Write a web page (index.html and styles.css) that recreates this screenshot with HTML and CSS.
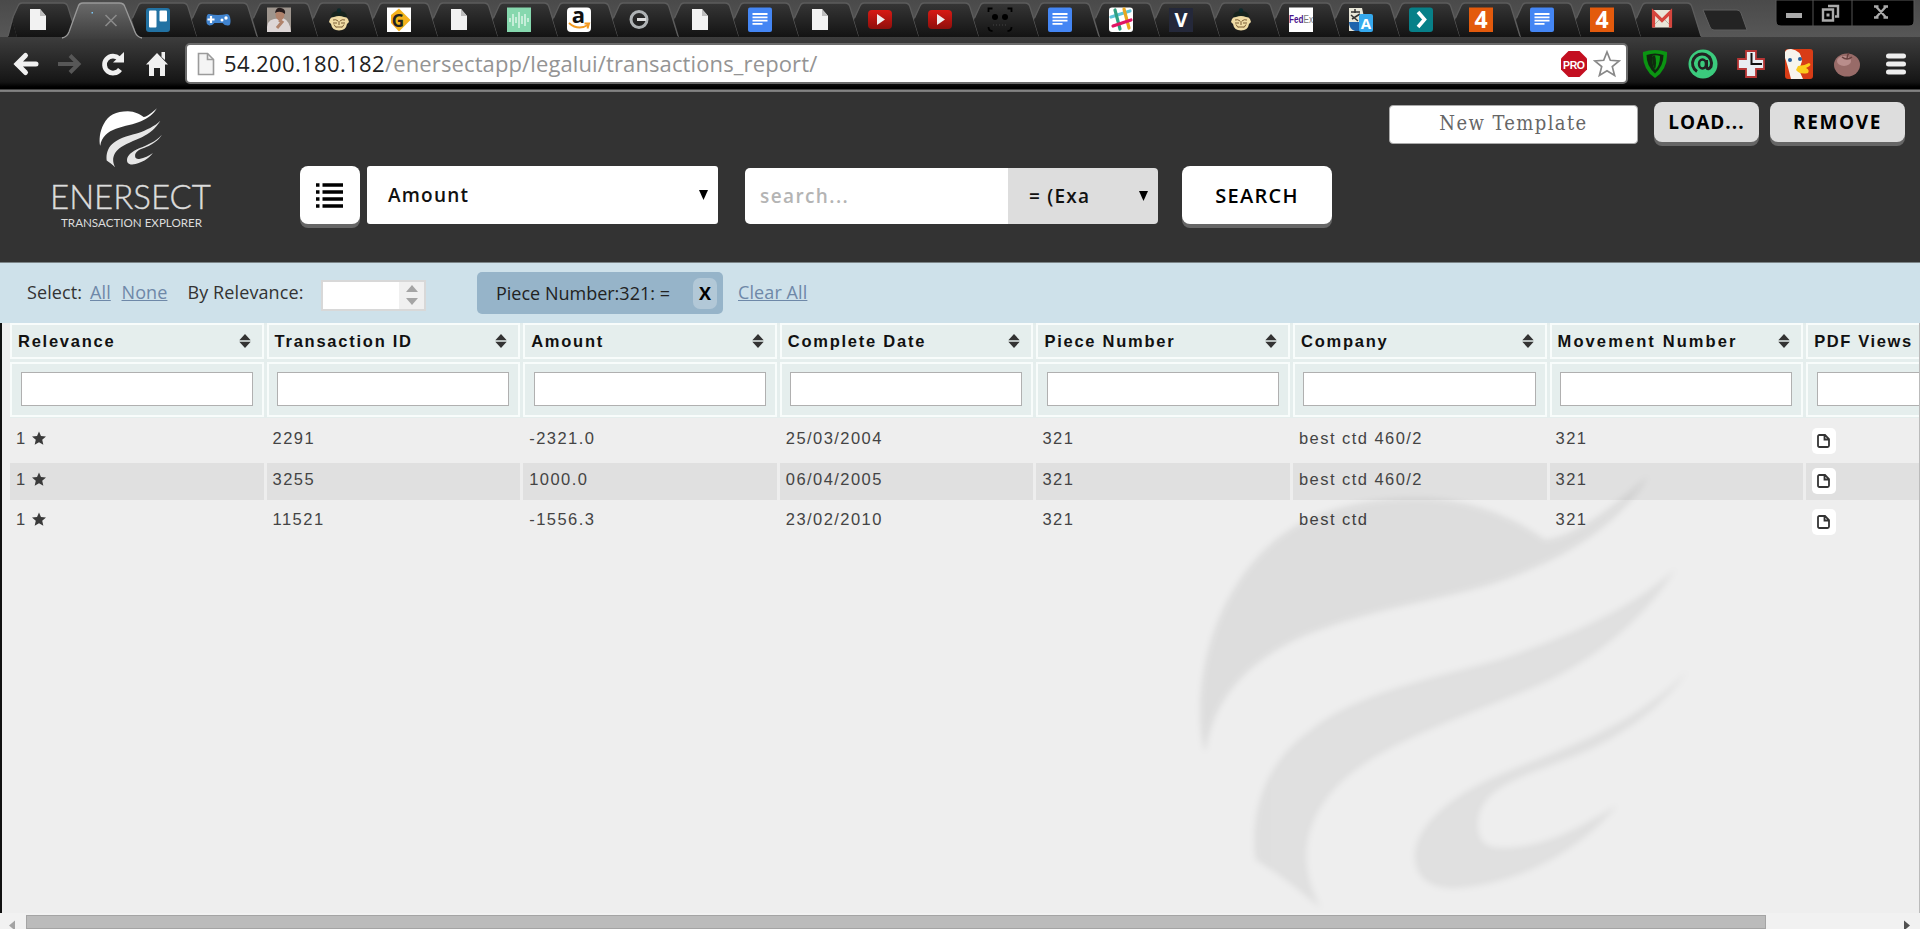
FILE: index.html
```html
<!DOCTYPE html>
<html lang="en">
<head>
<meta charset="utf-8">
<title>Enersect Transaction Explorer</title>
<link rel="stylesheet" href="styles.css">
</head>
<body>
<svg class="defs" width="0" height="0" aria-hidden="true">
  <defs>
    <linearGradient id="tabfill" x1="0" y1="0" x2="0" y2="1"><stop offset="0" stop-color="#363636"/><stop offset="1" stop-color="#131313"/></linearGradient>
    <linearGradient id="activefill" x1="0" y1="0" x2="0" y2="1"><stop offset="0" stop-color="#6a6a6a"/><stop offset="1" stop-color="#3d3d3d"/></linearGradient>
    <linearGradient id="red" x1="0" y1="0" x2="0" y2="1"><stop offset="0" stop-color="#d81a14"/><stop offset="1" stop-color="#8e0f0c"/></linearGradient>
    <!-- tab symbols share a 60x37 box whose centre is x=30 -->
    <symbol id="tab" overflow="visible"><path d="M9 37 4 20 10 6q1-3 4-3h41q4 0 5 4l9 30z" fill="url(#tabfill)"/><path d="M4.500 18 10 6q1-3 4-3h41q4 0 5 4l9 29" fill="none" stroke="#5c5c5c" stroke-width="1.300"/></symbol>
    <symbol id="doc" overflow="visible"><path d="M22 9h10l6 7v14H22z" fill="#f2f2f2"/><path d="M32 9v7h6z" fill="#bdbdbd"/></symbol>
    <symbol id="gdoc" overflow="visible"><rect x="18" y="7.500" width="24" height="24.500" rx="2" fill="#4486f4"/><path d="M22.500 14h15M22.500 17.300h15M22.500 20.600h15M22.500 23.900h10" stroke="#fff" stroke-width="1.800"/></symbol>
    <symbol id="tube" overflow="visible"><rect x="18" y="10" width="24" height="19" rx="4" fill="url(#red)"/><path d="M27 14v11l8-5.500z" fill="#eee"/></symbol>
    <symbol id="four" overflow="visible"><rect x="18" y="7.500" width="24" height="24.500" fill="#e35a0c"/><text x="30" y="28" class="fav-four">4</text></symbol>
    <symbol id="monk" overflow="visible"><path d="M22 17q0-6 8-6t8 6z" fill="#16231d"/><circle cx="30" cy="10.500" r="2.200" fill="#0d2a2c"/><path d="M21 19q1-2 4-2 5-2 10 0 3 0 4 2l1 3-2 2q-1 6.500-8 6.500T22 24l-2-2z" fill="#f0dca5"/><path d="M24 20q3-1 5 1M31 21q2-2 5-1M24 23h4M32 23h4M30 21v4M27 27h6M25 24.500l2 3M35 24.500l-2 3" stroke="#7b5c34" stroke-width="1" fill="none"/></symbol>
    <symbol id="swoosh" viewBox="0 0 1568 1407" preserveAspectRatio="none">
      <path d="M70 870C45 750 60 560 150 400C260 200 430 115 700 115C860 120 980 180 1060 240C1150 230 1270 130 1360 48C1290 170 1160 270 1000 335C850 405 620 430 430 500C250 560 100 680 75 870Z"/>
      <g class="swoosh-tail"><path d="M1440 325C1350 480 1180 620 1020 685C850 760 640 830 510 930C380 1030 320 1180 410 1345C350 1295 280 1235 220 1200C200 1060 250 900 380 810C520 690 800 640 940 595C1120 530 1310 450 1440 325Z"/>
      <path d="M1475 630C1400 750 1250 850 1130 895C1000 950 860 980 865 1100C870 1160 900 1165 960 1163C1080 1155 1180 1090 1270 1035C1180 1150 1010 1270 800 1285C700 1285 680 1230 682 1180C690 1090 790 1000 960 930C1130 860 1330 790 1475 630Z"/></g>
    </symbol>
    <symbol id="star" viewBox="0 0 20 20"><path d="M10 0l2.800 6.600 7.200.6-5.400 4.700L16.200 19 10 15.200 3.800 19l1.600-7.100L0 7.200l7.200-.6z"/></symbol>
    <symbol id="sort" viewBox="0 0 12 14"><path d="M6 0l5.700 6.200H.3zM6 14L.3 7.800h11.400z"/></symbol>
    <symbol id="file" viewBox="0 0 13 14"><path d="M2.500 1H8l4 4v6.500q0 1.500-1.500 1.500h-8Q1 13 1 11.500v-9Q1 1 2.500 1zM7.500 1v4.500H12" fill="none" stroke="#333" stroke-width="1.800"/></symbol>
  </defs>
</svg>

<div class="tabstrip">
  <div class="tabs">
    <svg class="tab"><use href="#tab"/><path d="M0 37 4 20 9 37z" fill="#191919"/><path d="M0 36 5 17" stroke="#5c5c5c" stroke-width="1.300"/><use href="#doc"/></svg>
    <svg class="tab tab-active"><path d="M-6 39q5-1 7-7L10 7q1-4 5-4h36q5 0 6 4l10 25q2 6 7 7z" fill="url(#activefill)"/><path d="M-6 38q5-1 7-6L10 7q1-4 5-4h36q5 0 6 4l10 25q2 5 7 6" fill="none" stroke="#999" stroke-width="1.300"/><path d="M37.500 15l11 11M48.500 15l-11 11" stroke="#8a8a8a" stroke-width="1.600"/><rect x="23.500" y="12" width="1.500" height="1.500" fill="#7cc8f5"/></svg>
    <svg class="tab"><use href="#tab"/><rect x="18" y="8" width="24" height="24" rx="3" fill="#2272a3"/><rect x="21" y="10.500" width="7.500" height="17" rx="1" fill="#fff"/><rect x="31.500" y="10.500" width="7.500" height="11" rx="1" fill="#fff"/></svg>
    <svg class="tab"><use href="#tab"/><path d="M21 14q9 2 18 0 3 0 3.500 6t-3 5.500q-3 0-5-2.500h-8q-2 2.500-5 2.500-4-1-3-6.500 0-5 2.500-5z" fill="#4083ce"/><path d="M23 16v7M19.500 19.500h7" stroke="#fff" stroke-width="2.200"/><circle cx="34" cy="20" r="1.500" fill="#fff"/><circle cx="38" cy="18" r="1.700" fill="#fff"/></svg>
    <svg class="tab"><use href="#tab"/><rect x="18" y="7.500" width="24" height="24.500" fill="#9e958d"/><path d="M18 32q-1-12 7-13l9-1q7 3 8 14z" fill="#ddd6d6"/><ellipse cx="31" cy="14.500" rx="4.500" ry="6" fill="#b0836c"/><path d="M26 13q1-6 6-5t4 6q-5-4-10-1z" fill="#261c1c"/><path d="M30 20l3 2-5 6" stroke="#b0836c" stroke-width="3" fill="none"/></svg>
    <svg class="tab"><use href="#tab"/><use href="#monk"/></svg>
    <svg class="tab"><use href="#tab"/><rect x="18" y="7.500" width="24" height="24.500" fill="#fff"/><path d="M30 8.500 41.500 20 30 31.500 22 23V15z" fill="#f4b21d"/><text x="29" y="27" class="fav-g">G</text></svg>
    <svg class="tab"><use href="#tab"/><use href="#doc"/></svg>
    <svg class="tab"><use href="#tab"/><rect x="18" y="7.500" width="24" height="24.500" fill="#86d8ae"/><path d="M21 18v4M24 14v12M27 17v6M30 12v16M33 16v8M36 14v12M39 18v4" stroke="#dcf5e8" stroke-width="1.500"/></svg>
    <svg class="tab"><use href="#tab"/><rect x="18" y="7.500" width="24" height="24.500" rx="4" fill="#fff"/><text x="29.500" y="22.500" class="fav-a">a</text><path d="M20 23q9 8 19 2M35.500 23.500h4.500l-1.500 5" stroke="#f39a22" stroke-width="2" fill="none"/></svg>
    <svg class="tab"><use href="#tab"/><circle cx="30" cy="19.500" r="8" fill="none" stroke="#aeb2b4" stroke-width="3"/><path d="M28 19.500h9" stroke="#ddd" stroke-width="3"/></svg>
    <svg class="tab"><use href="#tab"/><use href="#doc"/></svg>
    <svg class="tab"><use href="#tab"/><use href="#gdoc"/></svg>
    <svg class="tab"><use href="#tab"/><use href="#doc"/></svg>
    <svg class="tab"><use href="#tab"/><use href="#tube"/></svg>
    <svg class="tab"><use href="#tab"/><use href="#tube"/></svg>
    <svg class="tab"><use href="#tab"/><path d="M18.500 12V8.500h4M37.500 8.500h4V12M41.500 27q0 4-4 4M22.500 31q-4 0-4-4" stroke="#000" stroke-width="1.800" fill="none"/><circle cx="25" cy="17" r="3" fill="#000"/><circle cx="35" cy="17" r="3" fill="#000"/><path d="M23 25h14" stroke="#444" stroke-dasharray="1 2"/></svg>
    <svg class="tab"><use href="#tab"/><use href="#gdoc"/></svg>
    <svg class="tab"><use href="#tab"/><rect x="18" y="7.500" width="24" height="24.500" rx="3" fill="#fff"/><g fill="none" stroke-width="3.200" stroke-linecap="round"><path d="M20 17l19-6" stroke="#5dc4d8"/><path d="M24 10l5 19" stroke="#2fa182"/><path d="M33 9l5 19" stroke="#e9a820"/><path d="M22 26l18-6" stroke="#e01563"/></g></svg>
    <svg class="tab"><use href="#tab"/><rect x="18" y="8" width="24" height="24" fill="#24283a"/><text x="30" y="27" class="fav-v">V</text></svg>
    <svg class="tab"><use href="#tab"/><use href="#monk"/></svg>
    <svg class="tab"><use href="#tab"/><rect x="18" y="7.500" width="24" height="24.500" fill="#fff"/><text x="18" y="23" class="fav-fed" textLength="24" lengthAdjust="spacingAndGlyphs">Fed<tspan class="fav-ex">Ex</tspan></text></svg>
    <svg class="tab"><use href="#tab"/><path d="M18 8h13l2 9-3 14H18z" fill="#e8e6d8"/><path d="M20 12h9M24 9v4M21 19l8-5M20 15l7 6" stroke="#333" stroke-width="1.500"/><path d="M18 22h11v9h-5q-6-2-6-9z" fill="#1d63ac"/><rect x="28" y="14" width="14" height="18" rx="2" fill="#35a9ee"/><text x="35" y="29" class="fav-tr">A</text></svg>
    <svg class="tab"><use href="#tab"/><rect x="18" y="7.500" width="24" height="24.500" rx="3" fill="#078088"/><path d="M27 12l6.500 7.500L27 27" fill="none" stroke="#fff" stroke-width="3.600"/></svg>
    <svg class="tab"><use href="#tab"/><use href="#four"/></svg>
    <svg class="tab"><use href="#tab"/><use href="#gdoc"/></svg>
    <svg class="tab"><use href="#tab"/><use href="#four"/></svg>
    <svg class="tab"><use href="#tab"/><rect x="20" y="10" width="20" height="17.500" rx="1" fill="#e9e5d8"/><path d="M20 27l8-8M40 27l-8-8" stroke="#b9b3a3"/><path d="M21.500 27.500V12L30 20.500 38.500 12v15.500" fill="none" stroke="#d5453d" stroke-width="3.200"/></svg>
    <svg class="tab newtab"><path d="M3 10h34q3 0 4 3l6 17H14q-3 0-4-3z" fill="#232323" stroke="#5f5f5f"/></svg>
  </div>
  <svg class="wincontrols" width="140" height="27"><path d="M1 0h138v21q0 5-5 5H6q-5 0-5-5z" fill="#000" stroke="#585858"/><path d="M38 0v26M77 0v26" stroke="#555"/><path d="M11 15.500h16" stroke="#aaa" stroke-width="5"/><g fill="none" stroke="#aaa" stroke-width="2.400"><path d="M48 9.500h10v11H48z"/><path d="M53 6h10v10.500h-3"/></g><path d="M51.500 15h3" stroke="#aaa" stroke-width="3"/><path d="M101 6.500l10 11M111 6.500l-10 11M99 6.500h4.500M108.500 6.500h4.500M99 17.500h4.500M108.500 17.500h4.500" stroke="#aaa" stroke-width="2.300"/></svg>
</div>

<div class="toolbar">
  <div class="nav">
    <svg width="28" height="28" viewBox="0 0 28 28"><path d="M13.500 5.500L5 14l8.500 8.500M5 14h19" fill="none" stroke="#f0f0f0" stroke-width="5" stroke-linecap="round"/></svg>
    <svg width="28" height="28" viewBox="0 0 28 28"><path d="M14 5.500l8.500 8.500-8.500 8.500M21 14H2" fill="none" stroke="#575757" stroke-width="4"/></svg>
    <svg width="28" height="28" viewBox="0 0 28 28"><path d="M21 19.500a8.500 8.500 0 1 1-1-11" fill="none" stroke="#f0f0f0" stroke-width="4.800"/><path d="M14 12.500L25 2v10.500z" fill="#f0f0f0"/></svg>
    <svg width="28" height="28" viewBox="0 0 28 28"><path d="M14 3l11 11.500h-3V26h-5v-8h-6v8H6V14.500H3zM18.500 2h3.500v8L18.500 7z" fill="#f0f0f0"/></svg>
  </div>
  <div class="omnibox">
    <svg width="18" height="24" viewBox="0 0 18 24"><path d="M1.500 1.500h9l6 6v15h-15z" fill="#f4f4f4" stroke="#9b9b9b" stroke-width="1.600"/><path d="M10.500 1.500v6h6" fill="none" stroke="#9b9b9b" stroke-width="1.600"/></svg>
    <span class="url"><span class="host">54.200.180.182</span><span class="path">/enersectapp/legalui/transactions_report/</span></span>
    <svg class="pro" width="28" height="28" viewBox="0 0 28 28"><path d="M8.500 1h11L27 8.500v11L19.500 27h-11L1 19.500v-11z" fill="#c30f21"/><text x="14" y="18.500" class="pro-text" textLength="22">PRO</text></svg>
    <svg width="28" height="28" viewBox="0 0 28 28"><path d="M14 2l3.300 8.300 8.900.6-6.900 5.700 2.300 8.900L14 20.700l-7.600 4.800 2.300-8.900-6.900-5.700 8.900-.6z" fill="#fff" stroke="#888" stroke-width="1.700"/></svg>
  </div>
  <div class="extensions">
    <svg width="30" height="30" viewBox="0 0 30 30"><path d="M3 3q12-4 24 0Q28 20 15 29 2 20 3 3z" fill="#0b9512"/><path d="M6.500 6q8.500-3 17 0 0 11-8.500 18.500Q6.500 17 6.500 6z" fill="#10260f"/><path d="M12 7q4-1.500 8 0 0 10-5 14-3-5-3-14z" fill="#0b9512"/><path d="M15 6.500q2 7 0 14-3-5-3-13z" fill="#0f2a0e"/></svg>
    <svg width="30" height="30" viewBox="0 0 30 30"><circle cx="15" cy="15" r="14.500" fill="#3bcb7d"/><path d="M9 22.500a9.500 9.500 0 1 1 14-5q-3 4-4.500 1V11" fill="none" stroke="#222" stroke-width="3"/><ellipse cx="14.500" cy="15" rx="3.500" ry="4.500" fill="#3bcb7d" stroke="#222" stroke-width="2.500"/></svg>
    <svg width="30" height="30" viewBox="0 0 30 30"><path d="M10 2h10v8h8v10h-8v8H10v-8H2V10h8z" fill="#e9edf2" stroke="#b63535" stroke-width="1.800"/><path d="M15.500 4v11H26" fill="none" stroke="#111" stroke-width="2"/></svg>
    <svg width="30" height="30" viewBox="0 0 30 30"><rect x="1" y="0" width="28" height="30" rx="3" fill="#d83c16"/><path d="M1 3q1-3 6-3 10 1 11 12l-3 9 4 9H7Q3 14 1 9z" fill="#f7f5ee"/><circle cx="6" cy="11" r="2" fill="#27609b"/><circle cx="16" cy="10" r="2" fill="#27609b"/><path d="M14 17q6 0 11-3 4 2-3 5 4 2 2 5-8 2-12-3z" fill="#fccb1c"/></svg>
    <svg width="30" height="30" viewBox="0 0 30 30"><ellipse cx="15" cy="16" rx="13" ry="11.500" fill="#986b68"/><ellipse cx="12" cy="12" rx="7" ry="5" fill="#b98d8b"/><path d="M15 10q0-4 2-6M10 8q5 4 10 0" stroke="#68413f" fill="none" stroke-width="1.500"/></svg>
    <svg class="menu" width="22" height="26" viewBox="0 0 22 26"><path d="M3.500 5h15M3.500 13h15M3.500 21h15" stroke="#ededed" stroke-width="5" stroke-linecap="round"/></svg>
  </div>
</div>

<header class="app-header">
  <div class="brand">
    <svg class="brand-mark" width="69" height="64"><use href="#swoosh" width="69" height="64"/></svg>
    <svg class="brand-name" width="180" height="64"><text x="6" y="38.500" class="name" textLength="161" lengthAdjust="spacingAndGlyphs">ENERSECT</text><text x="17" y="56.500" class="tagline" textLength="141" lengthAdjust="spacingAndGlyphs">TRANSACTION EXPLORER</text></svg>
  </div>
  <div class="templates">
    <div class="template-name">New Template</div>
    <div class="btn btn-grey btn-load">LOAD...</div>
    <div class="btn btn-grey btn-remove">REMOVE</div>
  </div>
  <div class="searchbar">
    <div class="btn btn-list"><svg width="28" height="28" viewBox="0 0 28 28"><path d="M0 4h3.500M0 11h3.500M0 18h3.500M0 25h3.500M6.500 4H27M6.500 11H27M6.500 18H27M6.500 25H27" stroke="#000" stroke-width="3.700"/></svg></div>
    <div class="field-select"><span>Amount</span><svg width="9" height="10" viewBox="0 0 9 10"><path d="M0 0h9L4.500 10z"/></svg></div>
    <div class="query">search...</div>
    <div class="operator"><span>= (Exa</span><svg width="9" height="10" viewBox="0 0 9 10"><path d="M0 0h9L4.500 10z"/></svg></div>
    <div class="btn btn-search">SEARCH</div>
  </div>
</header>

<div class="filterbar">
  <span class="lbl-select">Select:</span><a class="lnk-all">All</a><a class="lnk-none">None</a>
  <span class="lbl-rel">By Relevance:</span>
  <div class="spinner"><div class="arrows"><svg width="12" height="7" viewBox="0 0 12 7"><path d="M6 0l6 7H0z"/></svg><svg width="12" height="7" viewBox="0 0 12 7"><path d="M0 0h12L6 7z"/></svg></div></div>
  <div class="chip"><span>Piece Number:321: =</span><b class="chip-x">X</b></div>
  <a class="lnk-clear">Clear All</a>
</div>

<main class="results">
  <svg class="watermark" width="540" height="469"><use href="#swoosh" width="540" height="469"/></svg>
  <div class="grid head">
    <div class="th">Relevance<svg><use href="#sort"/></svg></div><div class="th">Transaction ID<svg><use href="#sort"/></svg></div><div class="th">Amount<svg><use href="#sort"/></svg></div><div class="th">Complete Date<svg><use href="#sort"/></svg></div><div class="th">Piece Number<svg><use href="#sort"/></svg></div><div class="th">Company<svg><use href="#sort"/></svg></div><div class="th th-wide">Movement Number<svg><use href="#sort"/></svg></div><div class="th th-last">PDF Views</div>
    <div class="tf"><i></i></div><div class="tf"><i></i></div><div class="tf"><i></i></div><div class="tf"><i></i></div><div class="tf"><i></i></div><div class="tf"><i></i></div><div class="tf"><i></i></div><div class="tf"><i></i></div>
  </div>
  <div class="grid row"><div>1<svg class="star"><use href="#star"/></svg></div><div>2291</div><div>-2321.0</div><div>25/03/2004</div><div>321</div><div>best ctd 460/2</div><div>321</div><div><span class="pdf"><svg width="13" height="14"><use href="#file"/></svg></span></div></div>
  <div class="grid row odd"><div>1<svg class="star"><use href="#star"/></svg></div><div>3255</div><div>1000.0</div><div>06/04/2005</div><div>321</div><div>best ctd 460/2</div><div>321</div><div><span class="pdf"><svg width="13" height="14"><use href="#file"/></svg></span></div></div>
  <div class="grid row"><div>1<svg class="star"><use href="#star"/></svg></div><div>11521</div><div>-1556.3</div><div>23/02/2010</div><div>321</div><div>best ctd</div><div>321</div><div><span class="pdf"><svg width="13" height="14"><use href="#file"/></svg></span></div></div>
</main>

<div class="scrollbar">
  <svg width="26" height="16"><path d="M15 7.500v10L9 12.500z" fill="#a3a3a3"/></svg>
  <div class="thumb"></div>
  <svg width="26" height="16"><path d="M10 7.500v10l6-5z" fill="#505050"/></svg>
</div>
</body>
</html>
```
FILE: styles.css
```css
* { box-sizing: border-box; }
body { margin: 0; width: 1920px; height: 929px; overflow: hidden; display: flex; flex-direction: column; background: #eee; font-family: "Open Sans", sans-serif; }
.defs { position: absolute; }
svg { flex: none; }

/* browser chrome */
.tabstrip { height: 37px; flex: none; display: flex; justify-content: space-between; background: linear-gradient(#4a4a4a, #575757); padding-left: 8px; }
.tabs { display: flex; }
.tab { width: 60.150px; height: 37px; overflow: visible; flex: none; }
.tab-active { position: relative; z-index: 1; }
.newtab { margin-left: 8px; }
.wincontrols { margin-right: 5px; }
.fav-four, .fav-g, .fav-a, .fav-v, .fav-tr, .pro-text { text-anchor: middle; fill: #fff; font-weight: 700; }
.fav-four { font-size: 23px; }
.fav-g { font-size: 17px; fill: #222; }
.fav-a { font-size: 22px; fill: #111; }
.fav-v { font-size: 20px; }
.fav-tr { font-size: 15px; }
.fav-fed { font: 700 11px "Liberation Sans", sans-serif; fill: #4d148c; }
.fav-ex { fill: #777; font-weight: 400; }
.toolbar { height: 55px; flex: none; display: flex; align-items: flex-start; background: linear-gradient(#3d3d3d 0, #151515 45px, #000 50px, #000 52px, #888 53px, #777 55px); padding-top: 6px; }
.nav { display: flex; gap: 15.500px; width: 185px; padding: 7px 0 0 12px; }
.omnibox { width: 1443px; height: 41px; border: 2px solid #6b6b6b; border-radius: 5px; background: #fff; display: flex; align-items: center; padding: 0 5px 0 10px; }
.url { flex: 1; padding: 0 0 2px 9px; font: 22px/30px "Open Sans", sans-serif; color: #949494; white-space: nowrap; }
.host { color: #222; letter-spacing: .380px; }
.path { letter-spacing: .120px; }
.pro { margin-right: 5px; }
.pro-text { font: 700 10.500px "Liberation Sans", sans-serif; }
.extensions { display: flex; align-items: center; gap: 18px; padding: 6px 0 0 12px; }
.menu { margin-left: 5px; }

/* application header */
.app-header { height: 170px; flex: none; display: grid; grid-template-columns: 300px 1fr; grid-template-rows: 74px 96px; background: #333; }
.brand { grid-row: 1 / 3; display: flex; flex-direction: column; align-items: flex-start; padding-top: 14px; }
.brand-mark { margin-left: 97px; fill: #fff; }
.swoosh-tail { opacity: .88; }
.brand-name { margin-left: 44px; fill: #dcdcdc; }
.name { font: 300 33.500px Lato, sans-serif; stroke: #dcdcdc; stroke-width: .4px; }
.tagline { font: 400 12px Lato, sans-serif; }
.templates { display: flex; justify-content: flex-end; align-items: flex-start; padding: 10px 15px 0 0; }
.template-name { width: 249px; height: 39px; margin: 3px 16px 0 0; border-radius: 4px; border: 1px solid #aaa; background: #fff; font: 20px/35px "DejaVu Serif Condensed", "DejaVu Serif", serif; letter-spacing: 1.400px; text-align: center; color: #666; }
.btn { display: flex; align-items: center; justify-content: center; background: #fff; border-radius: 8px; font-weight: 600; color: #000; box-shadow: 0 4px 0 #666; }
.btn-grey { background: #ddd; height: 40px; font-size: 19px; font-weight: 700; letter-spacing: 1px; }
.btn-load { width: 105px; margin-right: 11px; }
.btn-remove { width: 135px; letter-spacing: 1.600px; }
.searchbar { display: flex; align-items: flex-start; }
.btn-list { width: 60px; height: 58px; }
.field-select, .query, .operator { display: flex; align-items: center; font-weight: 600; font-size: 19px; letter-spacing: 1.200px; color: #111; }
.field-select { width: 351px; height: 58px; margin-left: 7px; padding: 0 10px 0 21px; border-radius: 3px; background: #fff; justify-content: space-between; }
.query { width: 263px; height: 56px; margin: 2px 0 0 27px; padding: 0 0 1px 15px; border-radius: 5px 0 0 5px; background: #fff; color: #b4b4b4; letter-spacing: 1.400px; }
.operator { width: 150px; height: 56px; margin-top: 2px; padding: 0 10px 0 21px; border-radius: 0 4px 4px 0; background: #ddd; justify-content: space-between; }
.btn-search { width: 150px; height: 58px; margin-left: 24px; font-size: 20px; letter-spacing: 1.300px; }

/* filter bar */
.filterbar { height: 61px; flex: none; display: flex; align-items: center; background: #cee1ea; border-top: 1px solid #7c8588; padding-left: 27px; font-size: 18px; color: #333; white-space: nowrap; }
.filterbar a { color: #6e88a8; text-decoration: underline; }
.lbl-select, .lnk-all, .lnk-none, .lbl-rel, .lnk-clear { padding-bottom: 2px; letter-spacing: .100px; }
.lbl-select { width: 63px; }
.lnk-all { width: 31.500px; }
.lnk-none { width: 66px; }
.lbl-rel { width: 133.500px; }
.spinner { width: 105px; height: 31px; margin-top: 4px; border: 2px solid #d8d8d8; background: #fff; display: flex; justify-content: flex-end; }
.arrows { width: 25px; background: #f0f0f0; display: flex; flex-direction: column; align-items: center; justify-content: space-around; fill: #a5a5a5; }
.chip { width: 246px; height: 42px; margin-left: 51px; padding: 0 6px 0 19px; border-radius: 5px; background: #96b4c9; display: flex; align-items: center; justify-content: space-between; color: #222; }
.chip-x { width: 24px; height: 31px; border-radius: 7px; background: #b2c8d7; color: #000; text-align: center; line-height: 31px; }
.lnk-clear { margin-left: 15px; }

/* results table */
.results { position: relative; height: 590px; flex: none; border-left: 2px solid #111; border-right: 1px solid #bbb; padding-left: 8px; font: 16.500px "Liberation Sans", Arial, sans-serif; letter-spacing: 1.450px; color: #444; overflow: hidden; background: #eee; }
.watermark { position: absolute; left: 1178px; top: 137px; fill: rgba(0, 0, 0, .07); filter: blur(3px); }
.grid { display: grid; grid-template-columns: repeat(8, 253.600px); column-gap: 3px; width: 2060px; }
.head { background: #e5eeed; grid-template-rows: 36px 55px; row-gap: 3px; padding-bottom: 1px; margin-bottom: 4px; }
.th, .tf { border: 2px solid #f8fcfb; }
.th { display: flex; align-items: center; justify-content: space-between; padding: 0 11px 0 6px; font-weight: 700; letter-spacing: 1.750px; color: #111; white-space: nowrap; }
.th-wide { letter-spacing: 2.100px; }
.th-last { letter-spacing: 1.620px; }
.th svg { width: 12px; height: 14px; fill: #333; }
.tf { padding: 8px 9px 0 8.500px; }
.tf i { display: block; height: 34px; border: 1.500px solid #b0b0b0; background: #fff; }
.row { height: 37.500px; margin-bottom: 3px; }
.row > div { display: flex; align-items: center; padding: 0 0 4px 6px; }
.odd > div { background: rgba(0, 0, 0, .055); }
.star { width: 14px; height: 15px; fill: #3a3a3a; margin-left: 5.500px; }
.row .pdf { width: 24px; height: 26px; margin: 4px 0 0 -.5px; border-radius: 5px; background: #fff; display: flex; align-items: center; justify-content: center; }

.scrollbar { height: 16px; flex: none; display: flex; background: #f1f1f1; }
.thumb { width: 1740px; margin-top: 2px; border: 1px solid #a4a4a4; background: #bbb; }
.scrollbar svg:last-child { margin-left: auto; }
```
